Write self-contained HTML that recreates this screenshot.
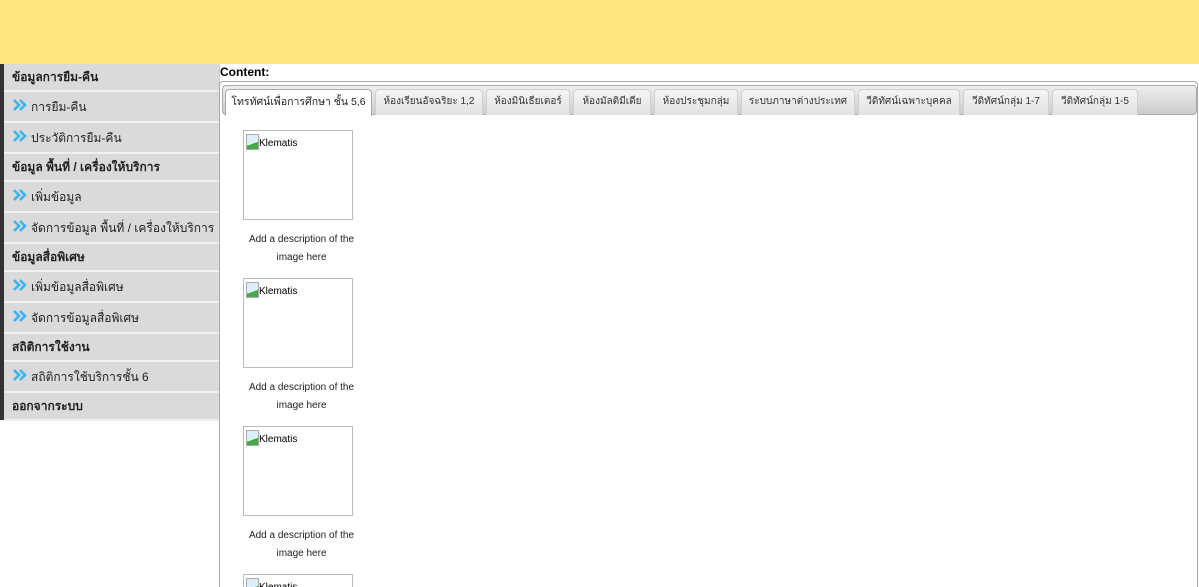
<!DOCTYPE html>
<html><head><meta charset="utf-8"><style>
*{margin:0;padding:0;box-sizing:border-box}
html,body{width:1199px;height:587px;overflow:hidden}
body{background:#fff;font-family:"Liberation Sans","Noto Sans CJK SC",sans-serif;position:relative}
.wrap{position:absolute;left:0;top:0;width:1199px;height:587px;overflow:hidden}
.hdr{position:absolute;left:0;top:0;width:1199px;height:64px;background:#ffe580}
.side{position:absolute;left:0;top:64px;width:219px;height:356px;background:#dadada;border-left:4px solid #333}
.row{position:absolute;left:4px;width:215px;border-bottom:2px solid #f0f0f0;font-size:12px;color:#222}
.h{font-weight:bold;height:28px;line-height:26px;padding-left:8px}
.i{height:31px;line-height:31px;padding-left:9px}
.i svg{vertical-align:-1px;margin-right:4px}
.vl{position:absolute;left:219px;top:64px;width:1px;height:523px;background:#ccc}
.ct{position:absolute;left:220px;top:65px;font-size:12px;font-weight:bold}
.box{position:absolute;left:219px;top:81px;width:979px;height:506px;border:1px solid #aaa;border-bottom:none;border-radius:4px 4px 0 0}
.bar{position:absolute;left:222px;top:85px;width:975px;height:30px;border:1px solid #aaa;border-radius:4px;background:linear-gradient(#eee,#ccc)}
.tab{position:absolute;top:89px;height:26px;background:linear-gradient(#f4f4f4,#e2e2e2);border:1px solid #d0d0d0;border-bottom:none;border-radius:4px 4px 0 0;font-size:10px;color:#333;text-align:center;line-height:24px;white-space:nowrap}
.tab.a{background:#fff;border-color:#aaa;height:27px;font-size:10.5px;color:#222}
.img{position:absolute;left:243px;width:110px;height:90px;border:1px solid #bbb;font-size:10px;padding:3px 0 0 2px}
.img.last{height:13px;border-bottom:none}
.img i{display:inline-block;width:13px;height:16px;border:1px solid #aaa;background:linear-gradient(160deg,#ddeeff 60%,#4a4 60%);vertical-align:-4px}
.cap{position:absolute;left:243px;width:117px;font-size:10px;text-align:center;line-height:18px;color:#222}
</style></head><body><div class="wrap">
<div class="hdr"></div>
<div class="side"></div>
<div class="row h" style="top:64px">ข้อมูลการยืม-คืน</div>
<div class="row i" style="top:92px"><svg width="14" height="14" viewBox="0 0 14 14"><path d="M1 2l5 5-5 5M7 2l5 5-5 5" fill="none" stroke="#3ab4f2" stroke-width="2.6"/></svg>การยืม-คืน</div>
<div class="row i" style="top:123px"><svg width="14" height="14" viewBox="0 0 14 14"><path d="M1 2l5 5-5 5M7 2l5 5-5 5" fill="none" stroke="#3ab4f2" stroke-width="2.6"/></svg>ประวัติการยืม-คืน</div>
<div class="row h" style="top:154px">ข้อมูล พื้นที่ / เครื่องให้บริการ</div>
<div class="row i" style="top:182px"><svg width="14" height="14" viewBox="0 0 14 14"><path d="M1 2l5 5-5 5M7 2l5 5-5 5" fill="none" stroke="#3ab4f2" stroke-width="2.6"/></svg>เพิ่มข้อมูล</div>
<div class="row i" style="top:213px"><svg width="14" height="14" viewBox="0 0 14 14"><path d="M1 2l5 5-5 5M7 2l5 5-5 5" fill="none" stroke="#3ab4f2" stroke-width="2.6"/></svg>จัดการข้อมูล พื้นที่ / เครื่องให้บริการ</div>
<div class="row h" style="top:244px">ข้อมูลสื่อพิเศษ</div>
<div class="row i" style="top:272px"><svg width="14" height="14" viewBox="0 0 14 14"><path d="M1 2l5 5-5 5M7 2l5 5-5 5" fill="none" stroke="#3ab4f2" stroke-width="2.6"/></svg>เพิ่มข้อมูลสื่อพิเศษ</div>
<div class="row i" style="top:303px"><svg width="14" height="14" viewBox="0 0 14 14"><path d="M1 2l5 5-5 5M7 2l5 5-5 5" fill="none" stroke="#3ab4f2" stroke-width="2.6"/></svg>จัดการข้อมูลสื่อพิเศษ</div>
<div class="row h" style="top:334px">สถิติการใช้งาน</div>
<div class="row i" style="top:362px"><svg width="14" height="14" viewBox="0 0 14 14"><path d="M1 2l5 5-5 5M7 2l5 5-5 5" fill="none" stroke="#3ab4f2" stroke-width="2.6"/></svg>สถิติการใช้บริการชั้น 6</div>
<div class="row h" style="top:393px">ออกจากระบบ</div>
<div class="vl"></div>
<div class="ct">Content:</div>
<div class="box"></div>
<div class="bar"></div>
<div class="tab a" style="left:225px;width:147px">โทรทัศน์เพื่อการศึกษา ชั้น 5,6</div>
<div class="tab" style="left:375px;width:108px">ห้องเรียนอัจฉริยะ 1,2</div>
<div class="tab" style="left:486px;width:84px">ห้องมินิเธียเตอร์</div>
<div class="tab" style="left:573px;width:78px">ห้องมัลติมีเดีย</div>
<div class="tab" style="left:654px;width:84px">ห้องประชุมกลุ่ม</div>
<div class="tab" style="left:741px;width:114px">ระบบภาษาต่างประเทศ</div>
<div class="tab" style="left:858px;width:102px">วีดิทัศน์เฉพาะบุคคล</div>
<div class="tab" style="left:963px;width:86px">วีดิทัศน์กลุ่ม 1-7</div>
<div class="tab" style="left:1052px;width:86px">วีดิทัศน์กลุ่ม 1-5</div>
<div class="img" style="top:130px"><i></i>Klematis</div>
<div class="cap" style="top:231px">Add a description of the image here</div>
<div class="img" style="top:278px"><i></i>Klematis</div>
<div class="cap" style="top:379px">Add a description of the image here</div>
<div class="img" style="top:426px"><i></i>Klematis</div>
<div class="cap" style="top:527px">Add a description of the image here</div>
<div class="img last" style="top:574px;overflow:hidden"><i></i>Klematis</div>
</div></body></html>
